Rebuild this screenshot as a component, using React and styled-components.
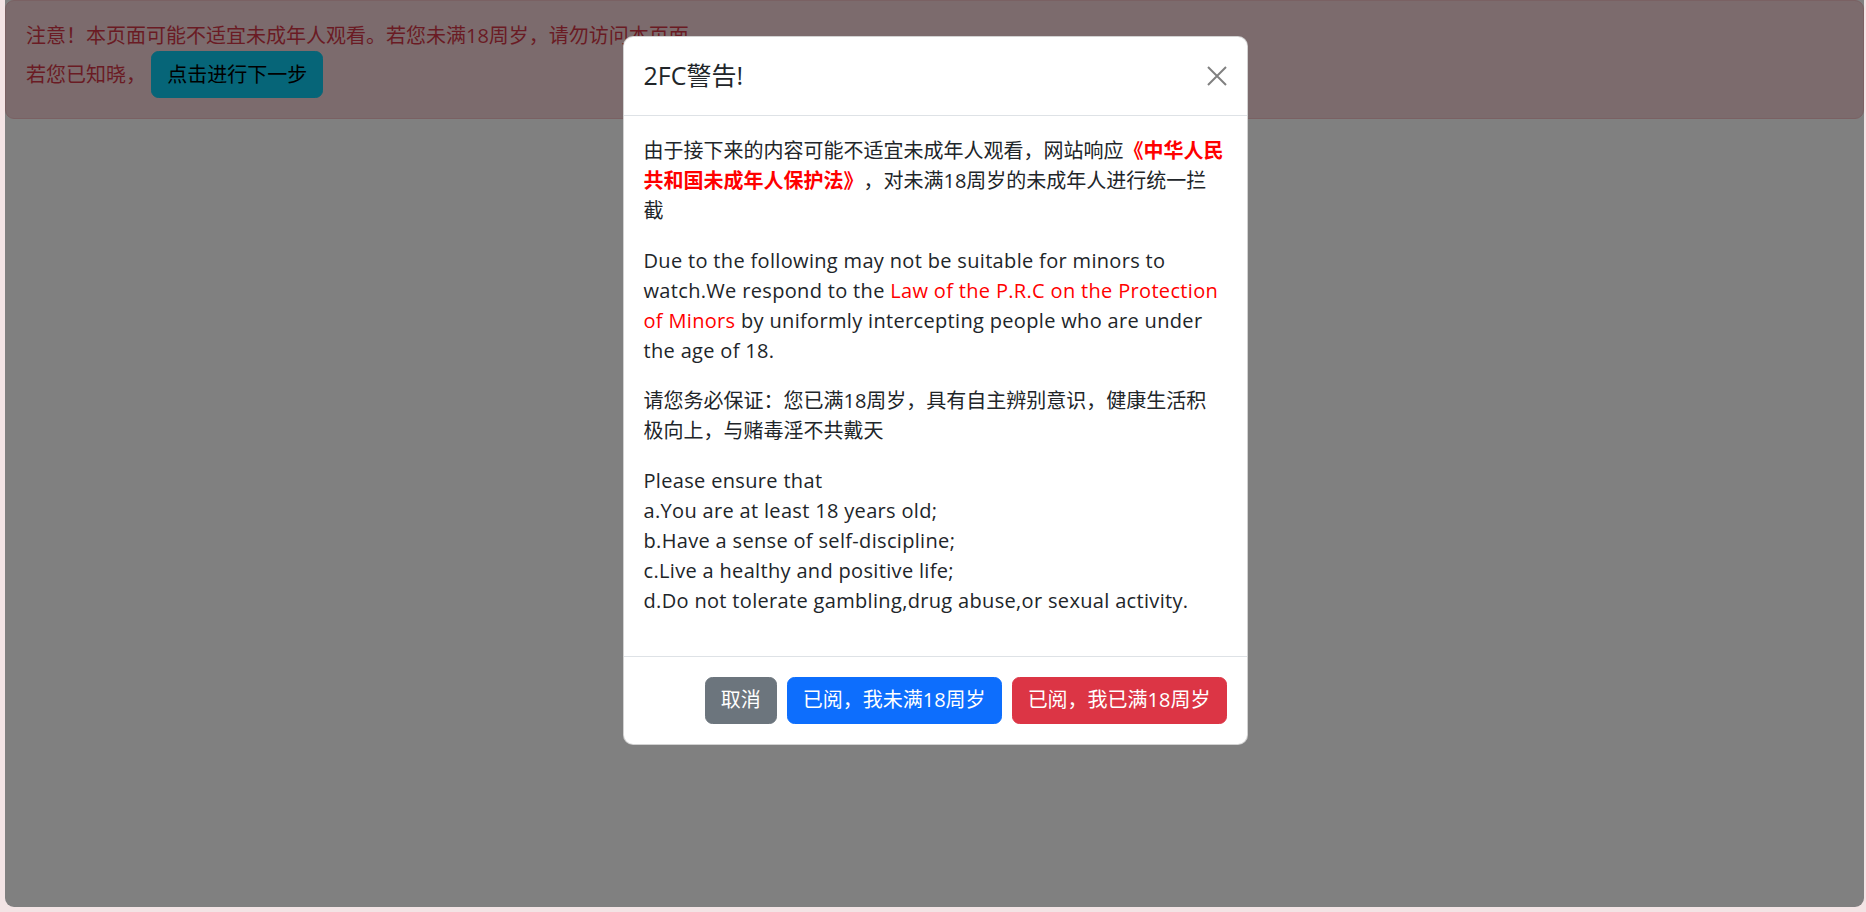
import React from "react";
import styled, { createGlobalStyle } from "styled-components";

const GlobalStyle = createGlobalStyle`
  html, body {
    margin: 0;
    padding: 0;
    background: #f3e4e5;
  }
  body {
    font-family: "Open Sans", "Noto Sans CJK SC", sans-serif;
    font-size: 20px;
    line-height: 1.5;
    color: #212529;
    text-spacing-trim: space-all;
  }
  * {
    box-sizing: border-box;
  }
`;

const Stage = styled.div`
  position: relative;
  height: 907px;
  margin: 0 2px 0 5px;
  background: #808080;
  border-radius: 0 0 9px 9px;
  overflow: hidden;
`;

const Alert = styled.div`
  padding: 20px;
  background: #7c6b6d;
  border: 1px solid #7a6163;
  border-radius: 9px;
  color: #6a1b24;
  height: 119px;
`;

const Button = styled.button`
  display: inline-block;
  font-family: inherit;
  font-size: 20px;
  line-height: 30px;
  padding: 7.5px 15px;
  border-radius: 7.5px;
  border: 1px solid ${(p) => p.$bg};
  background: ${(p) => p.$bg};
  color: ${(p) => p.$fg || "#fff"};
  cursor: pointer;
  margin: ${(p) => p.$margin || "0"};
  text-spacing-trim: space-all;
`;

const Overlay = styled.div`
  position: absolute;
  inset: 0;
  display: flex;
  justify-content: center;
  align-items: flex-start;
  padding-top: 36px;
  padding-left: 1px;
`;

const Dialog = styled.div`
  width: 625px;
  background: #fff;
  border: 1px solid rgba(0, 0, 0, 0.175);
  border-radius: 10px;
  display: flex;
  flex-direction: column;
`;

const Header = styled.div`
  display: flex;
  align-items: center;
  justify-content: space-between;
  padding: 20px;
  border-bottom: 1px solid #dee2e6;
`;

const Title = styled.h5`
  margin: 0;
  font-size: 25px;
  font-weight: 400;
  line-height: 37.5px;
`;

const Close = styled.button`
  width: 20px;
  height: 20px;
  padding: 0;
  border: 0;
  background: transparent;
  display: flex;
  cursor: pointer;
`;

const Body = styled.div`
  padding: 20px 22px 20px 20px;
`;

const Para = styled.p`
  margin: 0 0 20px;
  letter-spacing: ${(p) => (p.$latin ? "0.33px" : "0")};
`;

const Law = styled.span`
  color: #ff0000;
  font-weight: ${(p) => (p.$bold ? 700 : 400)};
`;

const Footer = styled.div`
  display: flex;
  justify-content: flex-end;
  align-items: center;
  padding: 15px;
  border-top: 1px solid #dee2e6;
`;

const App = () => {
  return (
    <>
      <GlobalStyle />
      <Stage>
        <Alert>
          注意！本页面可能不适宜未成年人观看。若您未满18周岁，请勿访问本页面。
          <br />
          若您已知晓，{" "}
          <Button $bg="#066578" $fg="#000">
            点击进行下一步
          </Button>
        </Alert>
        <Overlay>
          <Dialog>
            <Header>
              <Title>2FC警告!</Title>
              <Close aria-label="Close">
                <svg width="20" height="20" viewBox="0 0 20 20">
                  <path
                    d="M1 1L19 19M19 1L1 19"
                    stroke="#808080"
                    strokeWidth="2"
                    fill="none"
                  />
                </svg>
              </Close>
            </Header>
            <Body>
              <Para>
                由于接下来的内容可能不适宜未成年人观看，网站响应
                <Law $bold>《中华人民共和国未成年人保护法》</Law>
                ，对未满18周岁的未成年人进行统一拦截
              </Para>
              <Para $latin>
                Due to the following may not be suitable for minors to
                watch.We respond to the{" "}
                <Law>Law of the P.R.C on the Protection of Minors</Law> by
                uniformly intercepting people who are under the age of 18.
              </Para>
              <Para>
                请您务必保证：您已满18周岁，具有自主辨别意识，健康生活积极向上，与赌毒淫不共戴天
              </Para>
              <Para $latin>
                Please ensure that
                <br />
                a.You are at least 18 years old;
                <br />
                b.Have a sense of self-discipline;
                <br />
                c.Live a healthy and positive life;
                <br />
                d.Do not tolerate gambling,drug abuse,or sexual activity.
              </Para>
            </Body>
            <Footer>
              <Button $bg="#6c757d" $margin="5px">
                取消
              </Button>
              <Button $bg="#0d6efd" $margin="5px">
                已阅，我未满18周岁
              </Button>
              <Button $bg="#dc3545" $margin="5px">
                已阅，我已满18周岁
              </Button>
            </Footer>
          </Dialog>
        </Overlay>
      </Stage>
    </>
  );
};

export default App;
